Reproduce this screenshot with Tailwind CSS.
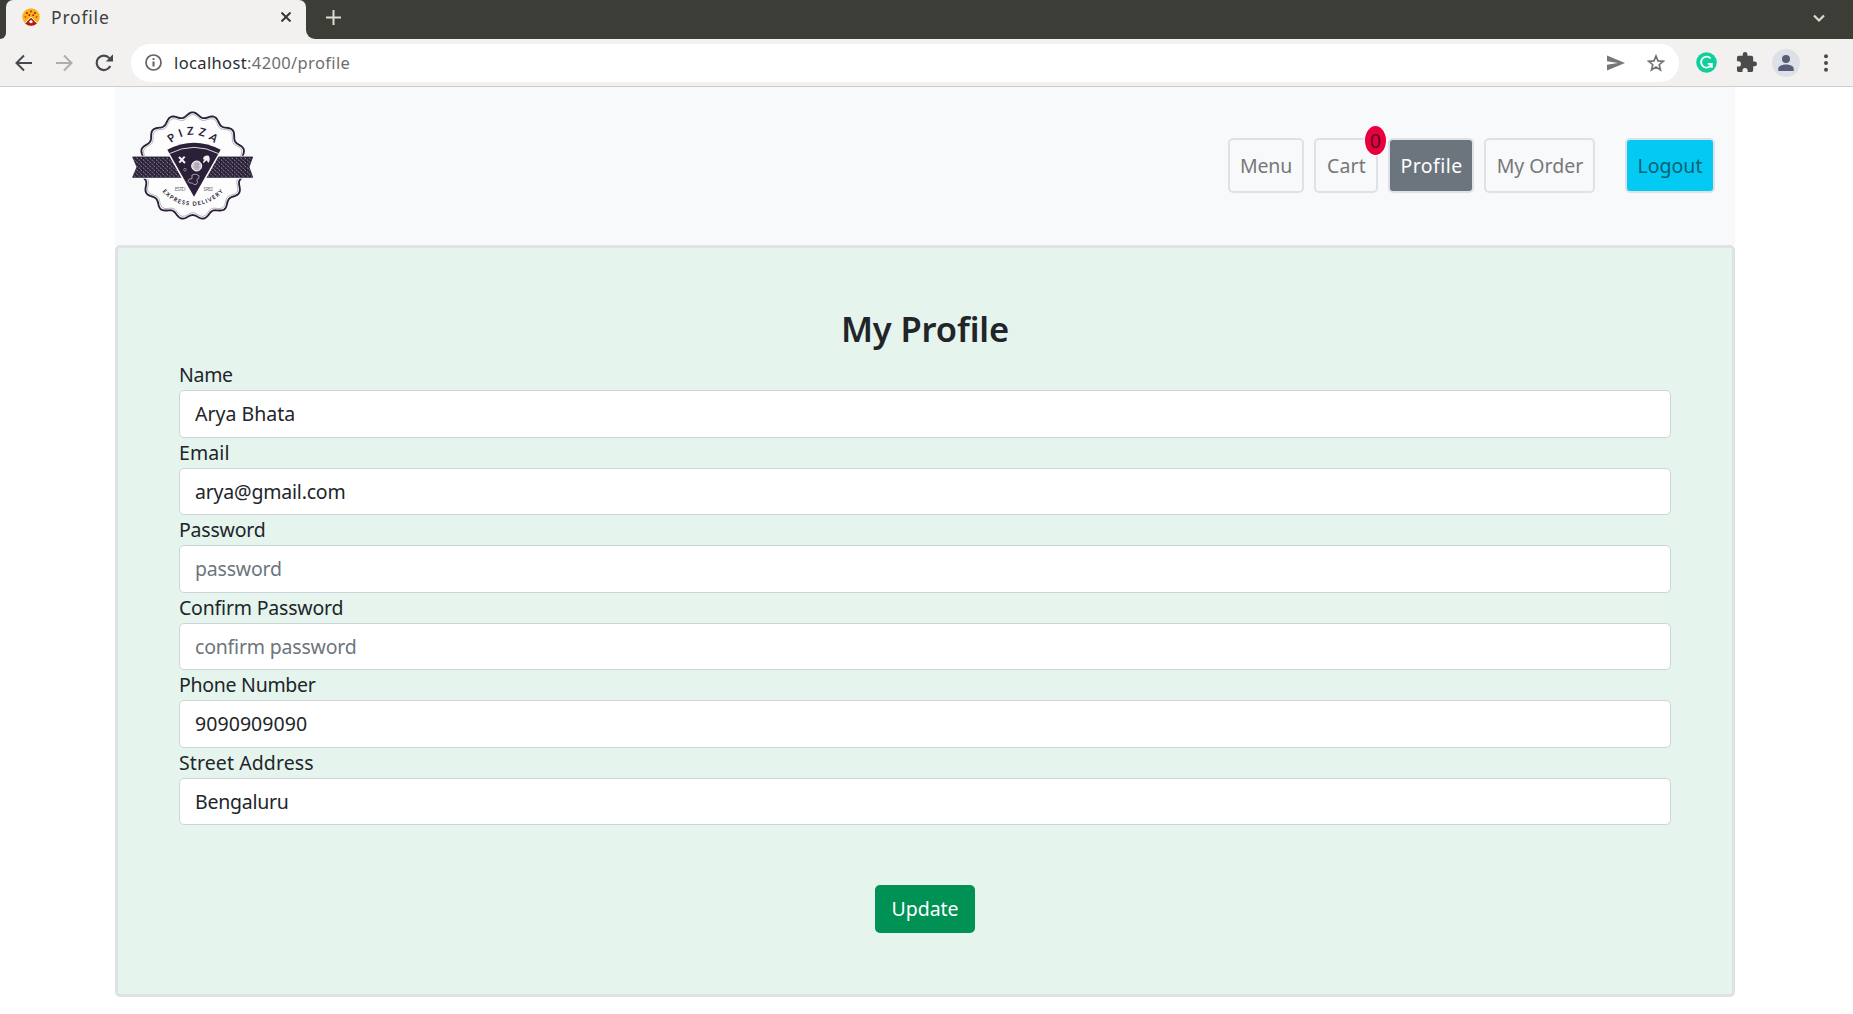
<!DOCTYPE html>
<html lang="en">
<head>
<meta charset="utf-8">
<title>Profile</title>
<script src="https://cdn.jsdelivr.net/npm/@tailwindcss/browser@4"></script>
</head>
<body class="h-screen overflow-hidden bg-white font-['Noto_Sans',sans-serif] text-[19.5px] leading-[30px] text-[#212529]">

<!-- Tab strip -->
<div class="flex h-[39px] bg-[#3d3d38]">
  <div class="flex h-[39px] w-[6px] items-end bg-[#f2f1ef]"><div class="h-full w-full rounded-br-[8px] bg-[#3d3d38]"></div></div>
  <div class="flex w-[300px] items-center rounded-tl-[7px] rounded-tr-[7px] bg-[#f2f1ef] pb-[5px] pl-4">
    <svg class="h-[18px] w-[18px]" viewBox="0 0 18 18">
      <circle cx="9" cy="9" r="8.7" fill="#f9b115"/>
      <g fill="#a51c14"><circle cx="5" cy="5" r="1"/><circle cx="9" cy="3.4" r=".9"/><circle cx="13" cy="5" r="1"/><circle cx="7.3" cy="7" r=".9"/><circle cx="11.2" cy="7.2" r=".9"/><circle cx="3.4" cy="9" r=".8"/><circle cx="14.6" cy="9" r=".8"/></g>
      <path d="M9 9.200 3 15.400Q9 20.300 15 15.400Z" fill="#b3161c"/>
      <path d="M9 9.200 2.800 15.300M9 9.200l6.200 6.100" stroke="#fff" stroke-width="1"/>
      <path d="M6.500 14.500 9 11.800l2.500 2.700-1.200-.300L9 15.500l-1.300-1.300z" fill="#fff"/>
    </svg>
    <span class="ml-[11px] text-[17.5px] tracking-[0.8px] text-[#3c4043]">Profile</span>
    <svg class="mr-[15px] ml-auto h-[10px] w-[10px]" viewBox="0 0 10 10" stroke="#35383b" stroke-width="2"><path d="M.5.5l9 9M9.500.5l-9 9"/></svg>
  </div>
  <div class="flex h-[39px] w-[20px] bg-[#f2f1ef]"><div class="h-full w-full rounded-bl-[9px] bg-[#3d3d38]"></div></div>
  <svg class="mt-[10px] h-[15px] w-[15px]" viewBox="0 0 15 15" stroke="#dfdbd2" stroke-width="2"><path d="M7.500 0v15M0 7.500h15"/></svg>
  <svg class="mt-[14px] mr-[28px] ml-auto h-[9px] w-[12px]" viewBox="0 0 12 9" fill="none" stroke="#dfdbd2" stroke-width="2.200"><path d="M1 1.500l5 5 5-5"/></svg>
</div>

<!-- Toolbar -->
<div class="flex h-[48px] items-center border-b border-[#cfccc9] bg-[#f2f1ef]">
  <svg class="ml-[15px] h-[18px] w-[18px]" viewBox="0 0 18 18" fill="none" stroke="#46484b" stroke-width="2"><path d="M17 9H2M9 1.500 1.500 9 9 16.500"/></svg>
  <svg class="ml-[22px] h-[18px] w-[18px]" viewBox="0 0 18 18" fill="none" stroke="#aeadab" stroke-width="2"><path d="M1 9h15M9 1.500 16.500 9 9 16.500"/></svg>
  <svg class="ml-[22px] h-[18px] w-[18px]" viewBox="0 0 18 18" fill="none" stroke="#46484b" stroke-width="2.200"><path d="M15.300 12A7.200 7.200 0 1 1 14.300 4.100"/><path d="M18 .3V7.500H10.800z" fill="#46484b" stroke="none"/></svg>
  <div class="ml-[18px] flex h-[38px] w-[1548px] items-center rounded-full bg-white">
    <svg class="ml-[14px] h-[17px] w-[17px]" viewBox="0 0 17 17" fill="none" stroke="#5f6368" stroke-width="1.700"><circle cx="8.500" cy="8.500" r="7.500"/><path d="M8.500 7.500v5M8.500 4.200v1.900" stroke-width="2"/></svg>
    <span class="ml-[12px] text-[16.5px] tracking-[0.37px] text-[#6b6f73]"><span class="text-[#2b2d31]">localhost</span>:4200/profile</span>
    <svg class="ml-auto h-[16px] w-[18px]" viewBox="0 0 18 16" fill="#76777a"><path d="M0 .5 18 8 0 15.500V9.700L11 8 0 6.300z"/></svg>
    <svg class="mr-[14px] ml-[22px] h-[18px] w-[18px]" viewBox="0 0 18 18" fill="none" stroke="#707276" stroke-width="1.700"><path d="M9 2l2 4.900 5.200.4-4 3.400 1.300 5.200L9 13.100l-4.500 2.800 1.300-5.200-4-3.400L7 6.900z"/></svg>
  </div>
  <svg class="ml-[17px] h-[21px] w-[21px]" viewBox="0 0 21 21"><circle cx="10.500" cy="10.500" r="10.300" fill="#0fcf9b"/><path d="M14.600 6.300a5.500 5.500 0 1 0 1.200 5.600M11.800 11.800h4.100v4" fill="none" stroke="#fff" stroke-width="1.800"/></svg>
  <svg class="ml-[19px] h-[21px] w-[21px]" viewBox="1 1 22 22" fill="#4a4b4d"><path d="M20.500 11H19V7c0-1.100-.9-2-2-2h-4V3.500a2.500 2.500 0 0 0-5 0V5H4c-1.100 0-1.990.9-1.990 2v3.800H3.500a2.700 2.700 0 0 1 0 5.400H2V20c0 1.100.9 2 2 2h3.800v-1.500a2.700 2.700 0 0 1 5.400 0V22H17c1.100 0 2-.9 2-2v-4h1.500a2.500 2.500 0 0 0 0-5z"/></svg>
  <svg class="ml-[15px] h-[28px] w-[28px]" viewBox="0 0 28 28"><circle cx="14" cy="14" r="14" fill="#dee0e7"/><g fill="#575d77"><circle cx="14" cy="10" r="4"/><path d="M6.300 22v-2.500c0-2.800 4.700-4 7.700-4s7.700 1.200 7.700 4V22z"/></g></svg>
  <svg class="ml-[24px] h-[18px] w-[4px]" viewBox="0 0 4 18" fill="#4a4b4d"><circle cx="2" cy="2.200" r="2"/><circle cx="2" cy="9" r="2"/><circle cx="2" cy="15.800" r="2"/></svg>
</div>

<main class="mr-[118px] ml-[115px] w-[1620px]">
  <!-- Site navigation -->
  <nav class="flex h-[158px] items-center bg-[#f8f9fb] pr-5 pb-px pl-[17px]">
    <svg class="h-[111px] w-[122px]" viewBox="66 75 366 333">
      <defs>
        <pattern id="weave" width="13" height="12" patternUnits="userSpaceOnUse"><rect width="13" height="12" fill="#2a2138"/><path d="M1 2l4 4M8 8l4 4" stroke="#b9b5c3" stroke-width="2.600"/></pattern>
        <path id="topArc" d="M154 243a94 94 0 0 1 188 0"/>
        <path id="bottomArc" d="M128 242a120 120 0 0 0 240 0"/>
      </defs>
      <path data-r="158" fill="#fdfdfe" stroke="#2a2138" stroke-width="5.500"/>
      <path data-r="151" fill="none" stroke="#8e8998" stroke-width="2"/>
      <path d="M66 215H430L419 246 430 278H66L79 246Z" fill="#f8f9fb" stroke="#f8f9fb" stroke-width="6"/>
      <path d="M68 216H428L417 246 428 277H68L81 246Z" fill="url(#weave)" stroke="#2a2138" stroke-width="2.500"/>
      <path d="M166 192Q252 146 338 192L252 346Z" fill="#fdfdfe"/>
      <path d="M172 194Q252 152 332 194L252 335Z" fill="#2a2138"/>
      <path d="M178 206Q252 168 326 206" fill="none" stroke="#fdfdfe" stroke-width="2.500"/>
      <circle cx="260" cy="243" r="15" fill="#c9c6d0" stroke="#fff" stroke-width="3"/>
      <path d="M252 238h16M251 246h18M258 231v24M264 231v24" stroke="#8b8697" stroke-width="1.500"/>
      <path d="M207 216l18 18M224 215l-16 18" stroke="#f3f2f6" stroke-width="6"/>
      <path d="M279 223q1-13 17-11q7 11-1 22l-5-8-9 8q-5-3 3-10z" fill="#f3f2f6"/>
      <circle cx="225" cy="254" r="4" fill="none" stroke="#aaa6b4" stroke-width="2"/>
      <path d="M246 270q12-6 21 2q2 10-7 12q6 8-1 14q-9 3-12-4q-11 2-13-5q2-10 12-8z" fill="none" stroke="#b9b5c3" stroke-width="2.500"/>
      <g fill="#2a2138" class="font-['Lato',sans-serif]">
        <text class="text-[33px] font-bold" text-anchor="middle"><textPath href="#topArc" startOffset="50%" textLength="142">PIZZA</textPath></text>
        <text class="text-[17px] font-bold" text-anchor="middle"><textPath href="#bottomArc" startOffset="50%" textLength="208">EXPRESS DELIVERY</textPath></text>
        <text x="194" y="317" class="text-[16px]" fill="#77727f" textLength="33">ESTD</text>
        <text x="279" y="317" class="text-[16px]" fill="#77727f" textLength="30">1982</text>
      </g>
    </svg>
    <div class="ml-auto flex h-[55px] text-[#777]">
      <a class="flex w-[76px] items-center justify-center rounded-[5px] border-2 border-[#dee2e6] tracking-[-0.2px]">Menu</a>
      <a class="relative ml-[10px] flex w-[64px] items-center justify-center rounded-[5px] border-2 border-[#dee2e6] pl-px tracking-[0.2px]">Cart
        <span class="absolute -top-[15px] left-[48px] flex h-[31px] w-[23px] items-center justify-center rounded-[50%] border border-white bg-[#e8003f] text-[#5c0a22]">0</span></a>
      <a class="ml-[10px] flex w-[86px] items-center justify-center rounded-[5px] border-2 border-[#dee2e6] bg-[#6c757d] pl-px tracking-[0.45px] text-white">Profile</a>
      <a class="ml-[10px] flex w-[111px] items-center justify-center rounded-[5px] border-2 border-[#dee2e6] pl-px">My Order</a>
      <a class="ml-[30px] flex w-[90px] items-center justify-center rounded-[5px] border-2 border-[#dee2e6] bg-[#03caf3] text-[#0c5f74]">Logout</a>
    </div>
  </nav>

  <!-- Profile form -->
  <form class="h-[752px] rounded-[5px] border-3 border-[#dee2e6] bg-[#e5f4ed] px-[61px] pt-[60px]">
    <h2 class="mb-[10px] text-center text-[34.5px] leading-[42px] font-semibold tracking-[-0.1px]">My Profile</h2>
    <label class="block h-[30px] tracking-[-0.3px]">Name</label>
    <input class="block h-[47.5px] w-full rounded-[5px] border border-[#ced4da] bg-white px-[15px]" value="Arya Bhata">
    <label class="block h-[30px] tracking-[0.1px]">Email</label>
    <input class="block h-[47.5px] w-full rounded-[5px] border border-[#ced4da] bg-white px-[15px] tracking-[-0.2px]" value="arya@gmail.com">
    <label class="block h-[30px] tracking-[-0.2px]">Password</label>
    <input class="block h-[47.5px] w-full rounded-[5px] border border-[#ced4da] bg-white px-[15px] tracking-[-0.2px] placeholder:text-[#6c757d]" placeholder="password">
    <label class="block h-[30px] tracking-[-0.2px]">Confirm Password</label>
    <input class="block h-[47.5px] w-full rounded-[5px] border border-[#ced4da] bg-white px-[15px] tracking-[-0.2px] placeholder:text-[#6c757d]" placeholder="confirm password">
    <label class="block h-[30px] tracking-[-0.28px]">Phone Number</label>
    <input class="block h-[47.5px] w-full rounded-[5px] border border-[#ced4da] bg-white px-[15px] tracking-[0.07px]" value="9090909090">
    <label class="block h-[30px] tracking-[0.1px]">Street Address</label>
    <input class="block h-[47.5px] w-full rounded-[5px] border border-[#ced4da] bg-white px-[15px] tracking-[-0.25px]" value="Bengaluru">
    <button type="button" class="mx-auto mt-[60px] block h-[48px] w-[100px] rounded-[5px] bg-[#009155] text-white">Update</button>
  </form>
</main>

<script>
  // Scalloped badge outline: fifteen lobes around the logo centre.
  document.querySelectorAll('path[data-r]').forEach(function (p) {
    var r = +p.dataset.r, d = '';
    for (var i = 0; i < 360; i++) {
      var a = i * Math.PI / 180, q = r - 4 + 7 * Math.cos(15 * a);
      d += (i ? 'L' : 'M') + (248 + q * Math.sin(a)).toFixed(1) + ' ' + (243 - q * Math.cos(a)).toFixed(1);
    }
    p.setAttribute('d', d + 'Z');
  });
</script>
</body>
</html>
